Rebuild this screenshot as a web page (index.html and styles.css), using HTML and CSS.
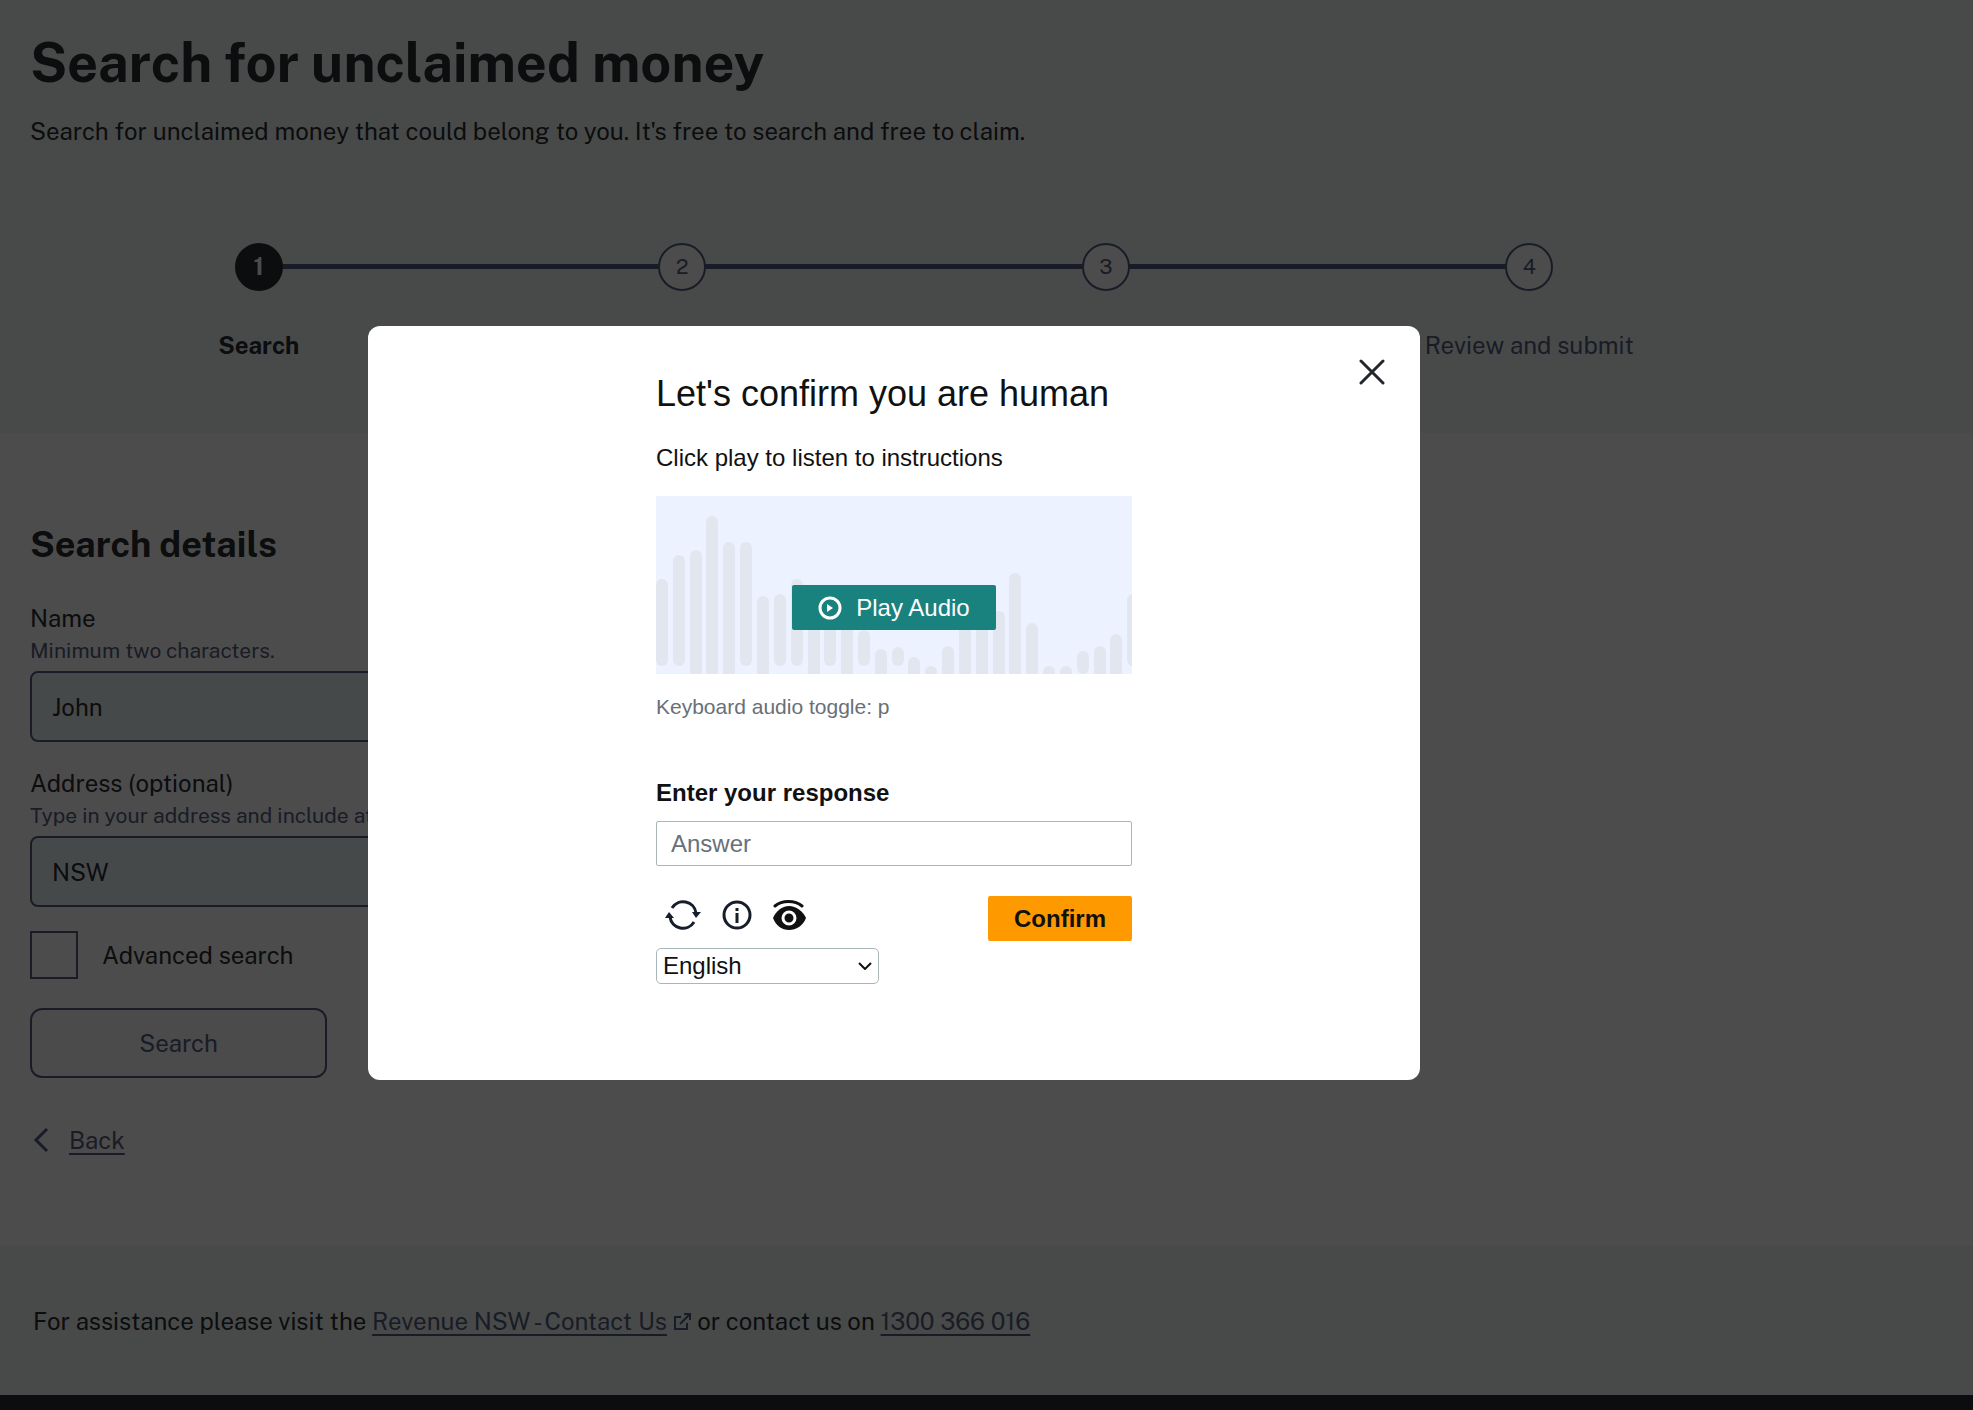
FILE: index.html
```html
<!DOCTYPE html>
<html lang="en">
<head>
    <meta charset="UTF-8">
    <meta name="viewport" content="width=device-width, initial-scale=1.0">
    <title>Search for unclaimed money</title>
    <link rel="stylesheet" href="styles.css">
</head>
<body>
    <header class="page-header">
        <div class="container">
            <h1>Search for unclaimed money</h1>
            <p class="intro">Search for unclaimed money that could belong to you. It's free to search and free to claim.</p>
            <ol class="steps">
                <li class="active"><span class="num">1</span><span class="step-label">Search</span></li>
                <li><span class="num">2</span><span class="step-label">Select</span></li>
                <li><span class="num">3</span><span class="step-label">Your details</span></li>
                <li><span class="num">4</span><span class="step-label">Review and submit</span></li>
            </ol>
        </div>
    </header>

    <main class="container">
        <form class="search-form">
            <h2>Search details</h2>
            <label for="name">Name</label>
            <p class="hint">Minimum two characters.</p>
            <input type="text" id="name" value="John">

            <label for="address">Address (optional)</label>
            <p class="hint">Type in your address and include at least a suburb.</p>
            <input type="text" id="address" value="NSW">

            <div class="check-row">
                <input type="checkbox" id="advanced">
                <label for="advanced">Advanced search</label>
            </div>

            <button type="button" class="search-btn">Search</button>
        </form>
        <a href="#" class="back">
            <svg width="20" height="28" viewBox="0 0 20 28"><path d="M17 3 6 14l11 11" fill="none" stroke="currentColor" stroke-width="3"/></svg>
            <span>Back</span>
        </a>
    </main>

    <section class="assist">
        <div class="container">
            <p>For assistance please visit the <a href="#">Revenue NSW - Contact Us</a>
                <svg class="ext" width="19" height="19" viewBox="0 0 19 19"><path d="M8 5H2v12h12v-6M11 2h6v6M17 2 7 12" fill="none" stroke="currentColor" stroke-width="2"/></svg>
                or contact us on <a href="#">1300 366 016</a></p>
        </div>
    </section>
    <footer class="page-footer"></footer>

    <div class="overlay">
        <div class="overlay-inner">
            <div class="modal" role="dialog" aria-modal="true" aria-labelledby="captchaTitle">
                <button type="button" class="close" aria-label="Close">
                    <svg width="26" height="26" viewBox="0 0 26 26"><path d="M2 2l22 22M24 2 2 24" fill="none" stroke="#22272b" stroke-width="3" stroke-linecap="round"/></svg>
                </button>
                <div class="captcha">
                    <h2 id="captchaTitle">Let's confirm you are human</h2>
                    <p class="instructions">Click play to listen to instructions</p>
                    <div class="audio">
                        <svg class="wave" viewBox="0 0 476 178" preserveAspectRatio="none" fill="#e2e7ef">
                            <rect x="0" y="83" width="12" height="87" rx="6"/>
                            <rect x="17" y="59" width="12" height="111" rx="6"/>
                            <rect x="34" y="54" width="12" height="140" rx="6"/>
                            <rect x="50" y="20" width="12" height="170" rx="6"/>
                            <rect x="67" y="46" width="12" height="150" rx="6"/>
                            <rect x="84" y="46" width="12" height="124" rx="6"/>
                            <rect x="101" y="100" width="12" height="90" rx="6"/>
                            <rect x="118" y="98" width="12" height="72" rx="6"/>
                            <rect x="135" y="83" width="12" height="87" rx="6"/>
                            <rect x="152" y="110" width="12" height="90" rx="6"/>
                            <rect x="168" y="110" width="12" height="60" rx="6"/>
                            <rect x="185" y="110" width="12" height="90" rx="6"/>
                            <rect x="202" y="134" width="12" height="36" rx="6"/>
                            <rect x="219" y="153" width="12" height="40" rx="6"/>
                            <rect x="236" y="151" width="12" height="19" rx="6"/>
                            <rect x="252" y="161" width="12" height="40" rx="6"/>
                            <rect x="269" y="170" width="12" height="30" rx="6"/>
                            <rect x="286" y="150" width="12" height="50" rx="6"/>
                            <rect x="303" y="120" width="12" height="80" rx="6"/>
                            <rect x="320" y="110" width="12" height="90" rx="6"/>
                            <rect x="337" y="115" width="12" height="90" rx="6"/>
                            <rect x="353" y="77" width="12" height="120" rx="6"/>
                            <rect x="370" y="127" width="12" height="80" rx="6"/>
                            <rect x="387" y="170" width="12" height="30" rx="6"/>
                            <rect x="404" y="170" width="12" height="30" rx="6"/>
                            <rect x="421" y="155" width="12" height="23" rx="6"/>
                            <rect x="438" y="150" width="12" height="50" rx="6"/>
                            <rect x="454" y="138" width="12" height="60" rx="6"/>
                            <rect x="471" y="98" width="12" height="72" rx="6"/>
                        </svg>
                        <button type="button" class="play">
                            <svg width="24" height="24" viewBox="0 0 24 24"><circle cx="12" cy="12" r="10" fill="none" stroke="#fff" stroke-width="3"/><path d="M9 8v8l6-4z" fill="#fff"/></svg>
                            Play Audio
                        </button>
                    </div>
                    <p class="toggle-hint">Keyboard audio toggle: p</p>

                    <label for="answer">Enter your response</label>
                    <input type="text" id="answer" placeholder="Answer">

                    <div class="actions">
                        <div class="tools">
                            <button type="button" aria-label="Get a new puzzle">
                                <svg width="36" height="30" viewBox="0 0 36 30" fill="none" stroke="#161e2b" stroke-width="3"><path d="M7 8A13 13 0 0 1 31 13M29 22A13 13 0 0 1 5 17"/><path d="M27 12h9l-5 6zM0 18h9l-5-6z" fill="#161e2b" stroke="none"/></svg>
                            </button>
                            <button type="button" aria-label="Information">
                                <svg width="30" height="30" viewBox="0 0 30 30" fill="none" stroke="#161e2b"><circle cx="15" cy="15" r="13" stroke-width="3"/><path d="M15 8v3M15 13v10" stroke-width="3"/></svg>
                            </button>
                            <button type="button" aria-label="Visual puzzle">
                                <svg width="34" height="30" viewBox="0 0 34 30"><path d="M2 6C9 0 22 0 29 6" fill="none" stroke="#111" stroke-width="3" stroke-linecap="round"/><path d="M0 18C3 11 9 6 16 6s14 5 17 12c-3 8-10 12-17 12S3 26 0 18z" fill="#111"/><circle cx="16" cy="18" r="6" fill="#111" stroke="#fff" stroke-width="3"/></svg>
                            </button>
                        </div>
                        <button type="button" class="confirm">Confirm</button>
                    </div>
                    <div class="language">
                        <select aria-label="Language">
                            <option>English</option>
                        </select>
                        <svg width="14" height="8" viewBox="0 0 14 8"><path d="M1 1l6 6 6-6" fill="none" stroke="#111" stroke-width="2"/></svg>
                    </div>
                </div>
            </div>
        </div>
    </div>
</body>
</html>
```

FILE: styles.css
```css
* {
    box-sizing: border-box;
}
body {
    margin: 0;
    min-height: 100vh;
    display: flex;
    flex-direction: column;
    font-family: "Public Sans", Inter, "Liberation Sans", sans-serif;
    font-size: 24px;
    line-height: 32px;
    color: #2b2c30;
    background: #fff;
}
h1, h2, p, ol {
    margin: 0;
    padding: 0;
}
a {
    color: #566080;
    text-underline-offset: 4px;
}
button, input, select {
    font: inherit;
}
.container {
    max-width: 1788px;
    padding: 0 30px;
}

/* header */
.page-header {
    background: #f2f7f4;
    padding: 31px 0 72px;
}
h1 {
    font-size: 54px;
    line-height: 64px;
}
.intro {
    margin-top: 20px;
}
.steps {
    display: flex;
    list-style: none;
    margin: 96px 17px 0;
}
.steps li {
    flex: 1;
    position: relative;
    display: flex;
    flex-direction: column;
    align-items: center;
    gap: 38px;
    color: #566080;
}
.steps li + li::before {
    content: "";
    position: absolute;
    top: 21px;
    right: 50%;
    width: 100%;
    height: 5px;
    background: #566080;
}
.num {
    position: relative;
    z-index: 1;
    width: 48px;
    height: 48px;
    border: 2px solid #566080;
    border-radius: 50%;
    background: #fff;
    font-size: 21px;
    line-height: 43px;
    text-align: center;
}
.steps .active {
    z-index: 1;
    color: #2b2c30;
    font-weight: bold;
}
.active .num {
    background: #2b2c30;
    border-color: #2b2c30;
    color: #fff;
    font-size: 24px;
}

/* form */
main.container {
    padding-top: 89px;
    padding-bottom: 90px;
}
.search-form {
    max-width: 860px;
}
.search-form h2 {
    font-size: 36px;
    line-height: 44px;
    margin-bottom: 35px;
}
.search-form label {
    display: block;
    line-height: 34px;
}
.hint {
    font-size: 21px;
    color: #566080;
}
.search-form input[type="text"] {
    display: block;
    width: 100%;
    height: 71px;
    margin: 4px 0 24px;
    padding: 0 20px;
    border: 2px solid #566080;
    border-radius: 8px;
    background: #ebf4f4;
    color: #2b2c30;
}
.check-row {
    display: flex;
    align-items: center;
    gap: 24px;
}
.check-row input {
    appearance: none;
    width: 48px;
    height: 48px;
    margin: 0;
    border: 2px solid #566080;
}
.search-btn {
    width: 297px;
    height: 70px;
    margin-top: 29px;
    border: 2px solid #566080;
    border-radius: 12px;
    background: #f8faf9;
    color: #566080;
}
.back {
    display: flex;
    align-items: center;
    gap: 19px;
    margin-top: 46px;
    text-decoration: none;
}
.back span {
    text-decoration: underline;
}

/* assistance strip and footer */
.assist {
    background: #f2f7f4;
    padding: 59px 3px 58px;
}
.ext {
    color: #566080;
    vertical-align: -1px;
}
.page-footer {
    flex: 1;
    background: #2b2c30;
}

/* captcha dialog */
.overlay {
    position: fixed;
    inset: 0;
    z-index: 10;
    background: rgba(0, 0, 0, 0.7);
}
.overlay-inner {
    display: flex;
    align-items: center;
    justify-content: center;
    max-width: 1788px;
    height: 100%;
    padding-bottom: 4px;
}
.modal {
    position: relative;
    width: 1052px;
    padding: 46px 0 96px;
    border-radius: 12px;
    background: #fff;
    color: #111;
    font-family: "Liberation Sans", Arial, sans-serif;
    font-size: 24px;
}
.close {
    position: absolute;
    top: 33px;
    right: 35px;
    padding: 0;
    border: 0;
    background: none;
    line-height: 0;
}
.captcha {
    width: 476px;
    margin: 0 auto;
}
.captcha h2 {
    font-size: 36px;
    font-weight: normal;
    line-height: 44px;
}
.instructions {
    margin: 26px 0 22px;
}
.audio {
    position: relative;
    display: flex;
    justify-content: center;
    padding: 89px 0 44px;
    background: #ecf2ff;
}
.wave {
    position: absolute;
    inset: 0;
    width: 100%;
    height: 100%;
}
.play {
    position: relative;
    display: flex;
    align-items: center;
    gap: 14px;
    height: 45px;
    padding: 0 26px;
    border: 0;
    border-radius: 2px;
    background: #1a827e;
    color: #fff;
}
.toggle-hint {
    margin: 17px 0 54px;
    font-size: 21px;
    color: #687078;
}
.captcha label {
    display: block;
    font-weight: bold;
}
#answer {
    display: block;
    width: 100%;
    height: 45px;
    margin-top: 12px;
    padding: 0 14px;
    border: 1px solid #aab7b8;
    border-radius: 2px;
    color: #111;
}
#answer::placeholder {
    color: #687078;
}
.actions {
    display: flex;
    justify-content: space-between;
    margin-top: 30px;
}
.tools {
    display: flex;
    align-items: flex-start;
    gap: 21px;
    padding: 4px 9px;
}
.tools button {
    padding: 0;
    border: 0;
    background: none;
    line-height: 0;
}
.confirm {
    width: 144px;
    height: 45px;
    border: 0;
    border-radius: 2px;
    background: #ff9900;
    color: #111;
    font-weight: bold;
}
.language {
    display: grid;
    align-items: center;
    width: 223px;
    margin-top: 7px;
}
.language select,
.language svg {
    grid-area: 1 / 1;
}
.language select {
    appearance: none;
    height: 36px;
    padding: 0 6px;
    border: 1px solid #aab7b8;
    border-radius: 5px;
    background: #fff;
    color: #111;
}
.language svg {
    justify-self: end;
    margin-right: 7px;
    pointer-events: none;
}
```
